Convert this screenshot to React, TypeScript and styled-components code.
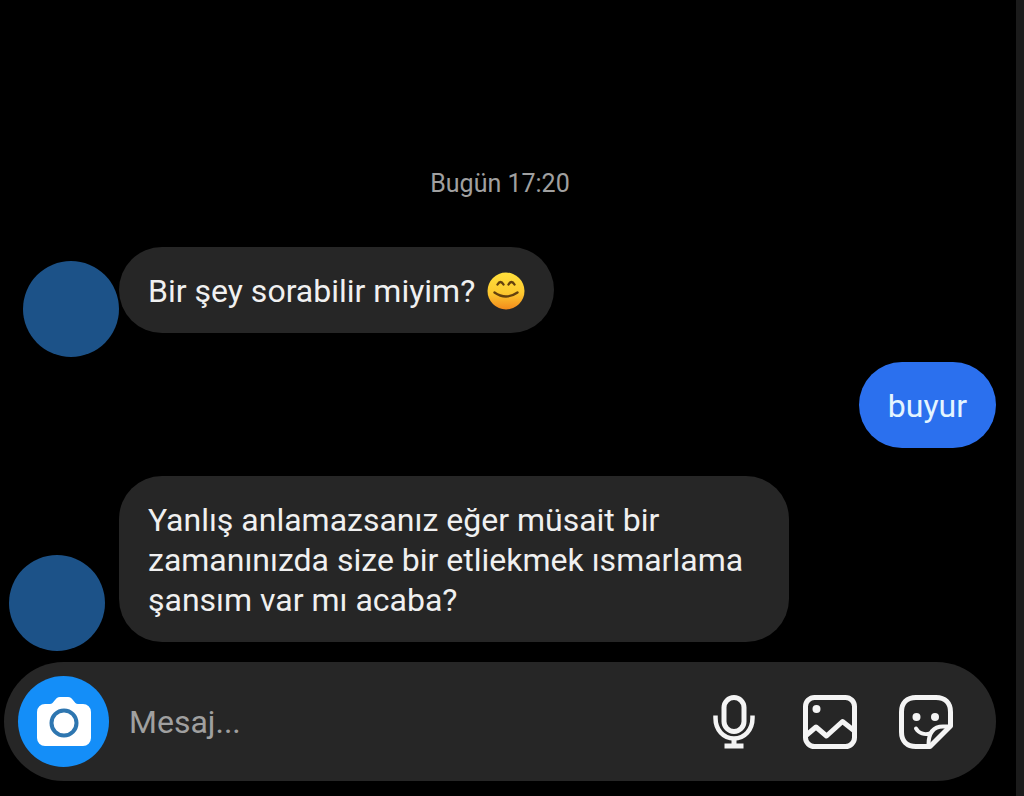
import React from "react";
import styled, { createGlobalStyle } from "styled-components";

const GlobalStyle = createGlobalStyle`
  *, *::before, *::after { box-sizing: border-box; }
  body {
    margin: 0;
    background: #000;
    font-family: Roboto, "Noto Sans", sans-serif;
  }
`;

const Screen = styled.div`
  display: flex;
  flex-direction: column;
  min-height: 100vh;
  padding: 0 20px 15px 4px;
  border-right: 8px solid #1b1b1b;
  background: #000;
`;

const Thread = styled.main`
  flex: 1;
  display: flex;
  flex-direction: column;
  justify-content: flex-end;
`;

const Timestamp = styled.time`
  margin-bottom: 48px;
  text-align: center;
  font-size: 25px;
  line-height: 30px;
  color: #a0a0a0;
`;

const MessageRow = styled.div<{ $own?: boolean; $after: number }>`
  display: flex;
  align-items: flex-end;
  justify-content: ${(p) => (p.$own ? "flex-end" : "flex-start")};
  margin-bottom: ${(p) => p.$after}px;
`;

const AvatarSlot = styled.div<{ $align: "flex-start" | "flex-end" }>`
  flex: none;
  display: flex;
  justify-content: ${(p) => p.$align};
  width: 115px;
  padding-left: 5px;
`;

const Avatar = styled.div`
  width: 96px;
  height: 96px;
  border-radius: 50%;
  background: #1c5288;
`;

const Bubble = styled.p<{ $own?: boolean; $lift?: number }>`
  margin: 0 0 ${(p) => p.$lift ?? 0}px;
  max-width: 670px;
  padding: 24px 29px 22px;
  border-radius: 43px;
  background: ${(p) => (p.$own ? "#2b70ee" : "#262626")};
  color: ${(p) => (p.$own ? "#e4f5ff" : "#f0f0f0")};
  font-size: 32px;
  line-height: 40px;
`;

const Emoji = styled.svg`
  width: 38px;
  height: 38px;
  margin-left: 4px;
  vertical-align: -8px;
`;

const Composer = styled.form`
  display: flex;
  align-items: center;
  height: 119px;
  padding: 0 43px 0 14px;
  border-radius: 60px;
  background: #262626;
`;

const CameraButton = styled.button`
  flex: none;
  display: flex;
  align-items: center;
  justify-content: center;
  width: 91px;
  height: 91px;
  padding: 0;
  border: 0;
  border-radius: 50%;
  background: #148ef8;
`;

const MessageInput = styled.input`
  flex: 1;
  min-width: 0;
  margin: 0 20px;
  padding: 1px 0 0;
  border: 0;
  outline: 0;
  background: transparent;
  font: 32px/40px Roboto, "Noto Sans", sans-serif;
  color: #f0f0f0;

  &::placeholder {
    color: #a0a0a0;
    opacity: 1;
  }
`;

const Actions = styled.div`
  display: flex;
  gap: 42px;
`;

const IconButton = styled.button`
  display: flex;
  width: 54px;
  height: 54px;
  padding: 0;
  border: 0;
  background: transparent;
  color: #f4f4f4;
`;

const LineIcon = styled.svg.attrs({ viewBox: "0 0 54 54", "aria-hidden": true })`
  width: 54px;
  height: 54px;
  fill: none;
  stroke: currentColor;
  stroke-width: 5;
  stroke-linecap: round;
  stroke-linejoin: round;
`;

const SmilingFace = () => (
  <Emoji viewBox="0 0 38 38" role="img" aria-label="😊">
    <defs>
      <linearGradient id="face" x1="0" y1="0" x2="0" y2="1">
        <stop offset="0" stopColor="#ffe03c" />
        <stop offset="0.55" stopColor="#fdc92f" />
        <stop offset="1" stopColor="#f28a1c" />
      </linearGradient>
    </defs>
    <circle cx="19" cy="19" r="18.5" fill="url(#face)" />
    <g fill="none" stroke="#63400e" strokeWidth="2.4" strokeLinecap="round">
      <path d="M10.5 12.5q3-5 6 0M21.5 12.5q3-5 6 0" />
      <path d="M7.5 20.5Q19 28.5 30.5 20.5" />
    </g>
  </Emoji>
);

const CameraIcon = () => (
  <svg width="54" height="50" viewBox="0 0 54 50" aria-hidden="true">
    <path
      fill="#fff"
      d="M8 7h5c4 0 5-7 10-7h8c5 0 6 7 10 7h5a8 8 0 0 1 8 8v26a8 8 0 0 1-8 8H8a8 8 0 0 1-8-8V15a8 8 0 0 1 8-8Z"
    />
    <circle cx="27" cy="26" r="12.5" fill="none" stroke="#2e76b0" strokeWidth="4" />
  </svg>
);

export default function App() {
  return (
    <Screen>
      <GlobalStyle />
      <Thread>
        <Timestamp>Bugün 17:20</Timestamp>
        <MessageRow $after={5}>
          <AvatarSlot $align="flex-end">
            <Avatar />
          </AvatarSlot>
          <Bubble $lift={24}>
            Bir şey sorabilir miyim? <SmilingFace />
          </Bubble>
        </MessageRow>
        <MessageRow $own $after={28}>
          <Bubble $own>buyur</Bubble>
        </MessageRow>
        <MessageRow $after={11}>
          <AvatarSlot $align="flex-start">
            <Avatar />
          </AvatarSlot>
          <Bubble $lift={9}>
            Yanlış anlamazsanız eğer müsait bir zamanınızda size bir etliekmek
            ısmarlama şansım var mı acaba?
          </Bubble>
        </MessageRow>
      </Thread>
      <Composer onSubmit={(e) => e.preventDefault()}>
        <CameraButton type="button" aria-label="Kamera">
          <CameraIcon />
        </CameraButton>
        <MessageInput type="text" placeholder="Mesaj..." aria-label="Mesaj" />
        <Actions>
          <IconButton type="button" aria-label="Ses kaydı">
            <LineIcon>
              <rect x="17" y="2.5" width="20" height="34" rx="10" />
              <path strokeLinecap="butt" strokeWidth="4.5" d="M8.5 20.5v2.5C8.5 35 16.5 43.5 27 43.5S45.5 35 45.5 23v-2.5" />
              <path strokeLinecap="butt" d="M27 43v8M17.5 51h19" />
            </LineIcon>
          </IconButton>
          <IconButton type="button" aria-label="Fotoğraf">
            <LineIcon>
              <rect x="2.5" y="2.5" width="49" height="49" rx="9" />
              <circle cx="13.5" cy="14" r="4" fill="currentColor" stroke="none" />
              <path d="M3 40.5l10-8.5 10.5 9L39.5 26.5l12 9.5" />
            </LineIcon>
          </IconButton>
          <IconButton type="button" aria-label="Çıkartma">
            <LineIcon>
              <path d="M17 2.5h20c9 0 14.5 5.5 14.5 14.5V31L31 51.5H17C8 51.5 2.5 46 2.5 37V17C2.5 8 8 2.5 17 2.5Z" />
              <path d="M50.5 31.5H44C34 31.5 29.5 37.5 29.5 50" strokeWidth="4" />
              <path d="M17 33.5c3 5 8.5 6.5 14 5" strokeWidth="4" />
              <circle cx="17.5" cy="22" r="4" fill="currentColor" stroke="none" />
              <circle cx="36" cy="22" r="4" fill="currentColor" stroke="none" />
            </LineIcon>
          </IconButton>
        </Actions>
      </Composer>
    </Screen>
  );
}
